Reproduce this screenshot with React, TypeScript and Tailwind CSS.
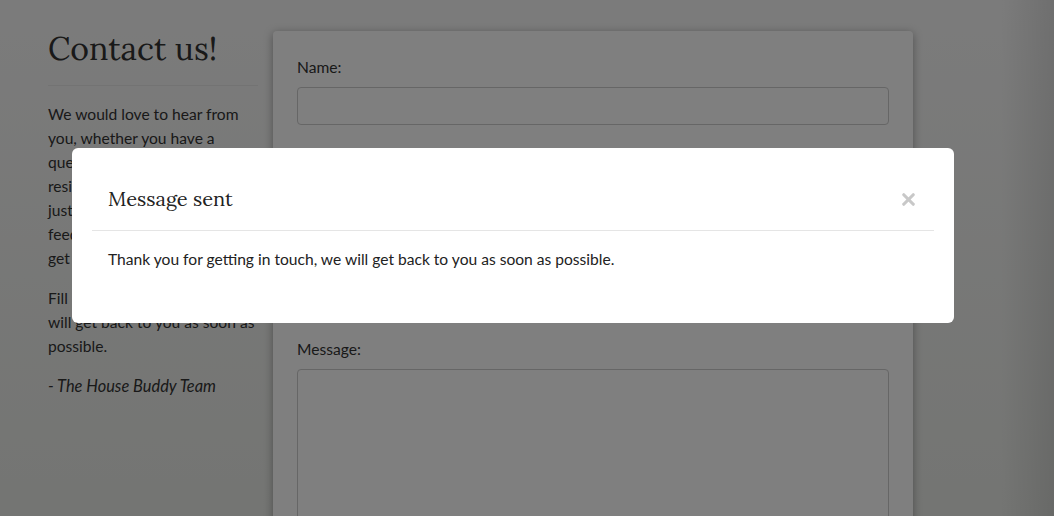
import { X } from 'lucide-react';

const fields = ['Name:', 'Email:', 'Phone:'];

const introLines = [
  'We would love to hear from',
  'you, whether you have a',
  'question about a property,',
  'residents or services, or',
  'just want to give us some',
  'feedback, we would love to',
  'get in touch.',
];

const fillLines = ['Fill in the form below and we', 'will get back to you as soon as', 'possible.'];

export default function App() {
  return (
    <div className="relative h-[516px] overflow-hidden bg-[linear-gradient(to_right,transparent_95%,rgba(0,0,0,0.1)),linear-gradient(to_bottom,#f7f7f7,#e8eae6)] font-['Lato','Liberation_Sans',sans-serif] text-[15.6px] text-[#333]">
      <div className="flex gap-[15px] pl-[48px]">
        {/* LEFT */}
        <div className="w-[210px] shrink-0">
          <h1 className="mt-[29px] font-['Lora','Liberation_Serif',serif] text-[32px] leading-[40px] text-[#333]">
            Contact us!
          </h1>
          <hr className="mt-[16px] mb-4 border-[#e6e6e6]" />
          <p className="mb-4 leading-6">
            {introLines.map((line, i) => (
              <span key={i} className="block">
                {line}
              </span>
            ))}
          </p>
          <p className="mb-4 leading-6">
            {fillLines.map((line, i) => (
              <span key={i} className="block whitespace-nowrap">
                {line}
              </span>
            ))}
          </p>
          <p className="text-[16.4px] leading-6 italic">- The House Buddy Team</p>
        </div>

        {/* FORM CARD */}
        <div className="mt-[31px] w-[640px] shrink-0 rounded bg-white px-6 pt-6 pb-10 shadow-[0_2px_10px_rgba(0,0,0,0.35)]">
          {fields.map((label) => (
            <div key={label} className="mb-6">
              <label className="block leading-6">{label}</label>
              <input className="mt-2 block h-[38px] w-full rounded border border-[#ccc] bg-white" />
            </div>
          ))}
          <label className="block leading-6">Message:</label>
          <textarea className="mt-2 block h-[220px] w-full rounded border border-[#ccc] bg-white" />
        </div>
      </div>

      {/* BACKDROP */}
      <div className="absolute inset-0 bg-black/50" />

      {/* MODAL */}
      <div className="absolute top-[148px] left-[72px] w-[882px] rounded-md bg-white p-5">
        <div className="flex items-center justify-between border-b border-[#e5e5e5] px-4 py-4">
          <h4 className="font-['Lora','Liberation_Serif',serif] text-[20px] leading-[30px] text-[#222]">
            Message sent
          </h4>
          <X className="h-[19px] w-[19px] text-[#c8c8c8]" strokeWidth={4} />
        </div>
        <div className="px-4 pt-4 pb-8">
          <p className="leading-6 text-[#222]">
            Thank you for getting in touch, we will get back to you as soon as possible.
          </p>
        </div>
      </div>
    </div>
  );
}
